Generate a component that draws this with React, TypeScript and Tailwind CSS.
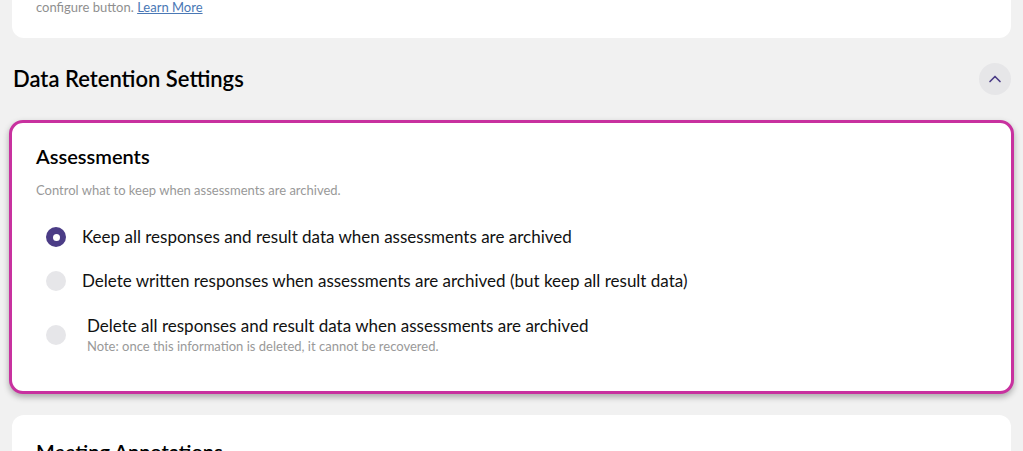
import { ChevronUp } from 'lucide-react'

const options = [
  {
    label: 'Keep all responses and result data when assessments are archived',
    checked: true,
  },
  {
    label: 'Delete written responses when assessments are archived (but keep all result data)',
    checked: false,
  },
]

function Radio({ checked }: { checked: boolean }) {
  return checked ? (
    <span className="flex h-5 w-5 shrink-0 items-center justify-center rounded-full bg-[#4b3c86]">
      <span className="h-[7px] w-[7px] rounded-full bg-white" />
    </span>
  ) : (
    <span className="h-5 w-5 shrink-0 rounded-full bg-[#e6e6e9]" />
  )
}

export default function App() {
  return (
    <div className="h-[451px] overflow-hidden bg-[#f1f1f1] px-3 font-['Lato','Liberation_Sans',sans-serif] text-[#111]">
      {/* Previous card (cut off) */}
      <div className="-mt-[19px] rounded-xl bg-white px-6 pb-[21px] pt-4">
        <p className="text-[13px] leading-[20px] text-[#8f8f8f]">
          configure button.{' '}
          <a href="#" className="text-[#4a78b5] underline">
            Learn More
          </a>
        </p>
      </div>

      {/* Section heading */}
      <div className="mt-[25px] flex h-8 items-center justify-between">
        <h2 className="pl-px text-[22px] font-semibold leading-none text-black">
          Data Retention Settings
        </h2>
        <button className="flex h-8 w-8 items-center justify-center rounded-full bg-[#e6e6e8] text-[#4b3c86]">
          <ChevronUp className="h-5 w-5" strokeWidth={2} />
        </button>
      </div>

      {/* Assessments card (highlighted) */}
      <div className="-mx-[3px] mt-[25px] h-[274px] rounded-[14px] border-[3px] border-[#c8319f] bg-white pl-[24px] pt-[19px] shadow-[0_3px_6px_rgba(0,0,0,0.3)]">
        <h3 className="text-[20px] font-semibold leading-[28px] text-black">Assessments</h3>
        <p className="mt-[12px] text-[13px] leading-[16px] text-[#999]">
          Control what to keep when assessments are archived.
        </p>
        <div className="mt-[17px] flex flex-col">
          {options.map((o) => (
            <label key={o.label} className="flex h-[44px] items-center gap-4 pl-[10px]">
              <Radio checked={o.checked} />
              <span className="text-[17px] leading-[22px] text-[#111]">{o.label}</span>
            </label>
          ))}
          <label className="mt-[12px] flex items-center gap-[21px] pl-[10px]">
            <Radio checked={false} />
            <span className="flex flex-col">
              <span className="text-[17px] leading-[22px] text-[#111]">
                Delete all responses and result data when assessments are archived
              </span>
              <span className="text-[13px] leading-[18px] text-[#999]">
                Note: once this information is deleted, it cannot be recovered.
              </span>
            </span>
          </label>
        </div>
      </div>

      {/* Next card */}
      <div className="mt-[21px] rounded-xl bg-white px-6 pt-[22px]">
        <h3 className="text-[20px] font-semibold leading-[28px] text-black">Meeting Annotations</h3>
      </div>
    </div>
  )
}
